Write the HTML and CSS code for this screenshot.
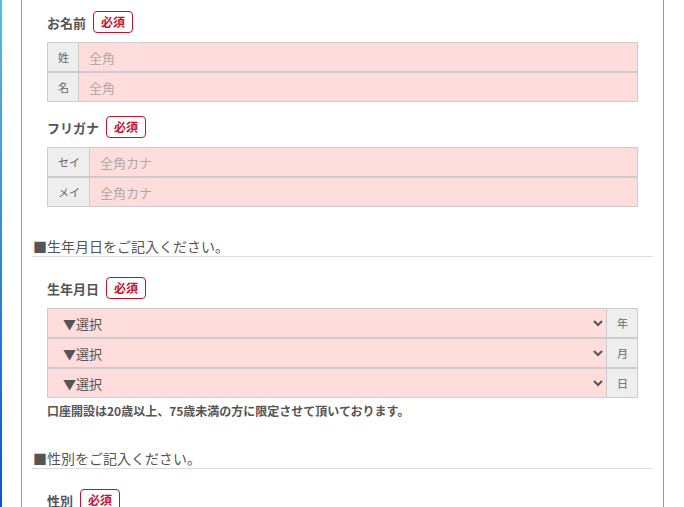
FILE: index.html
```html
<!DOCTYPE html>
<html lang="ja">
<head>
  <meta charset="UTF-8"/>
  <title>口座開設 お申込み</title>
  <link rel="stylesheet" href="styles.css">
</head>
<body>

  <div class="page">
    <div class="edge"></div>

    <div class="card">

      <div class="field first">
        <div class="field-head">
          <span class="field-label">お名前</span>
          <span class="required">必須</span>
        </div>
        <div class="input-group">
          <span class="addon">姓</span>
          <input type="text" placeholder="全角">
        </div>
        <div class="input-group">
          <span class="addon">名</span>
          <input type="text" placeholder="全角">
        </div>
      </div>

      <div class="field">
        <div class="field-head">
          <span class="field-label">フリガナ</span>
          <span class="required">必須</span>
        </div>
        <div class="input-group">
          <span class="addon">セイ</span>
          <input type="text" placeholder="全角カナ">
        </div>
        <div class="input-group">
          <span class="addon">メイ</span>
          <input type="text" placeholder="全角カナ">
        </div>
      </div>

      <h2 class="section-title">■生年月日をご記入ください。</h2>

      <div class="field">
        <div class="field-head">
          <span class="field-label">生年月日</span>
          <span class="required">必須</span>
        </div>
        <div class="input-group">
          <select><option>▼選択</option></select>
          <span class="addon suffix">年</span>
        </div>
        <div class="input-group">
          <select><option>▼選択</option></select>
          <span class="addon suffix">月</span>
        </div>
        <div class="input-group">
          <select><option>▼選択</option></select>
          <span class="addon suffix">日</span>
        </div>
        <p class="note">口座開設は20歳以上、75歳未満の方に限定させて頂いております。</p>
      </div>

      <h2 class="section-title">■性別をご記入ください。</h2>

      <div class="field">
        <div class="field-head">
          <span class="field-label">性別</span>
          <span class="required">必須</span>
        </div>
      </div>

    </div>
  </div>

</body>
</html>
```

FILE: styles.css
```css
body {
  margin: 0;
  font-family: "Noto Sans CJK JP", "Noto Sans", sans-serif;
  color: #555;
  background-color: #fff;
}

.page {
  display: flex;
  min-height: 507px;
}

.edge {
  width: 2px;
  background: linear-gradient(to bottom, #4cc3e2, #0a4fd6);
}

.card {
  box-sizing: border-box;
  margin-left: 19px;
  width: 643px;
  border-left: 1px solid #999;
  border-right: 1px solid #999;
  padding: 0 10px;
}

.field {
  padding: 20px 15px 0;
}

.field.first {
  padding-top: 11px;
}

.field + .field {
  padding-top: 14px;
}

.field-head {
  display: flex;
  align-items: center;
  gap: 7px;
  margin-bottom: 9px;
}

.field-label {
  font-size: 13px;
  font-weight: bold;
  color: #555;
}

.required {
  display: inline-block;
  height: 20px;
  line-height: 20px;
  padding: 0 7px;
  border: 1px solid #c8102e;
  border-radius: 4px;
  color: #c8102e;
  font-size: 12px;
  font-weight: bold;
}

.input-group {
  display: flex;
  height: 30px;
  box-sizing: border-box;
  border: 1px solid #ccc;
}

.addon {
  display: flex;
  align-items: center;
  padding: 0 9px 0 10px;
  background-color: #eee;
  border-right: 1px solid #ccc;
  font-size: 11px;
  color: #666;
}

.addon.suffix {
  border-right: none;
  border-left: 1px solid #ccc;
  width: 11px;
}

.input-group input {
  flex: 1;
  border: none;
  margin: 0;
  padding: 0 10px;
  background-color: #ffdddd;
  font-family: inherit;
  font-size: 13px;
  color: #555;
  outline: none;
}

.input-group input::placeholder {
  color: #aaa;
}

.input-group select {
  flex: 1;
  border: none;
  margin: 0;
  padding: 0 4px 0 11px;
  background-color: #ffdddd;
  font-family: inherit;
  font-size: 13px;
  color: #555;
  outline: none;
}

.note {
  margin: 5px 0 0;
  font-size: 12px;
  font-weight: bold;
  color: #555;
  line-height: 16px;
}

.section-title {
  margin: 29px 0 0;
  padding-left: 1px;
  font-size: 14px;
  font-weight: normal;
  line-height: 20px;
  color: #555;
  border-bottom: 1px solid #ddd;
}
```
